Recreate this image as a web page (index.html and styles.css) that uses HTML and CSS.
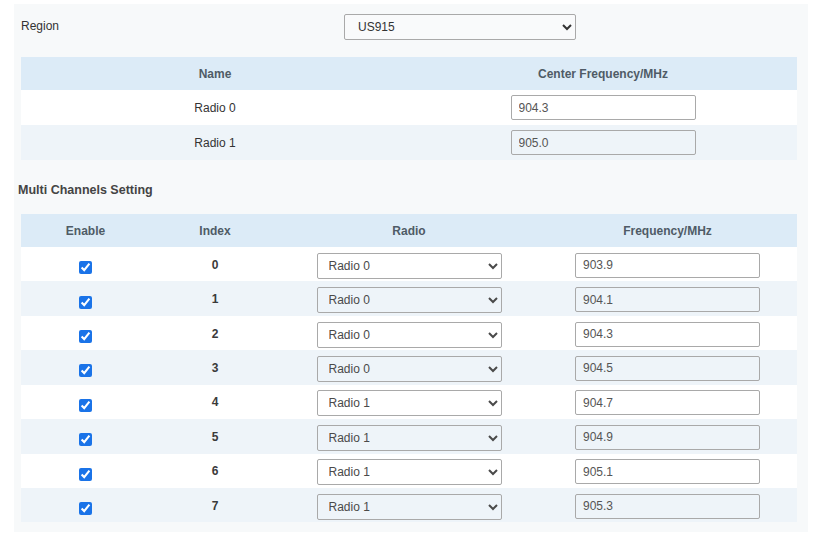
FILE: index.html
```html
<!DOCTYPE html>
<html>
<head>
<meta charset="utf-8">
<link rel="stylesheet" href="styles.css">
</head>
<body>
<div class="panel">
  <div class="region-row">
    <div class="region-label">Region</div>
    <select class="region-select"><option>US915</option></select>
  </div>

  <div class="grid grid-radio">
    <div class="row head"><div class="cell">Name</div><div class="cell">Center Frequency/MHz</div></div>
    <div class="row"><div class="cell">Radio 0</div><div class="cell"><input class="field" type="text" value="904.3"></div></div>
    <div class="row alt"><div class="cell">Radio 1</div><div class="cell"><input class="field" type="text" value="905.0"></div></div>
  </div>

  <div class="section-title">Multi Channels Setting</div>

  <div class="grid grid-multi">
    <div class="row head"><div class="cell">Enable</div><div class="cell">Index</div><div class="cell">Radio</div><div class="cell">Frequency/MHz</div></div>
    <div class="row"><div class="cell"><input class="check" type="checkbox" checked></div><div class="cell idx">0</div><div class="cell"><select class="field sel"><option>Radio 0</option><option>Radio 1</option></select></div><div class="cell"><input class="field freq" type="text" value="903.9"></div></div>
    <div class="row alt"><div class="cell"><input class="check" type="checkbox" checked></div><div class="cell idx">1</div><div class="cell"><select class="field sel"><option>Radio 0</option><option>Radio 1</option></select></div><div class="cell"><input class="field freq" type="text" value="904.1"></div></div>
    <div class="row"><div class="cell"><input class="check" type="checkbox" checked></div><div class="cell idx">2</div><div class="cell"><select class="field sel"><option>Radio 0</option><option>Radio 1</option></select></div><div class="cell"><input class="field freq" type="text" value="904.3"></div></div>
    <div class="row alt"><div class="cell"><input class="check" type="checkbox" checked></div><div class="cell idx">3</div><div class="cell"><select class="field sel"><option>Radio 0</option><option>Radio 1</option></select></div><div class="cell"><input class="field freq" type="text" value="904.5"></div></div>
    <div class="row"><div class="cell"><input class="check" type="checkbox" checked></div><div class="cell idx">4</div><div class="cell"><select class="field sel"><option>Radio 1</option><option>Radio 0</option></select></div><div class="cell"><input class="field freq" type="text" value="904.7"></div></div>
    <div class="row alt"><div class="cell"><input class="check" type="checkbox" checked></div><div class="cell idx">5</div><div class="cell"><select class="field sel"><option>Radio 1</option><option>Radio 0</option></select></div><div class="cell"><input class="field freq" type="text" value="904.9"></div></div>
    <div class="row"><div class="cell"><input class="check" type="checkbox" checked></div><div class="cell idx">6</div><div class="cell"><select class="field sel"><option>Radio 1</option><option>Radio 0</option></select></div><div class="cell"><input class="field freq" type="text" value="905.1"></div></div>
    <div class="row alt"><div class="cell"><input class="check" type="checkbox" checked></div><div class="cell idx">7</div><div class="cell"><select class="field sel"><option>Radio 1</option><option>Radio 0</option></select></div><div class="cell"><input class="field freq" type="text" value="905.3"></div></div>
  </div>
</div>
</body>
</html>
```

FILE: styles.css
```css
html, body {
  margin: 0;
  padding: 0;
  background: #ffffff;
}

body {
  font-family: "Liberation Sans", Arial, sans-serif;
  font-size: 12px;
  line-height: 14px;
  color: #333333;
}

.panel {
  margin: 4px 0 0 14px;
  width: 776px;
  height: 528px;
  padding: 0 11px 0 7px;
  background: #f7f9fa;
}

.region-row {
  display: flex;
  align-items: flex-start;
  padding-top: 10px;
  height: 26px;
  margin-bottom: 17px;
}

.region-label {
  width: 323px;
  padding-top: 5px;
  color: #333333;
}

.region-select {
  width: 232px;
  height: 26px;
  border: 1px solid #a9a9a9;
  border-radius: 2px;
  background: #f9fafb;
  padding: 0 0 0 9px;
  font-family: "Liberation Sans", Arial, sans-serif;
  font-size: 12px;
  color: #333333;
  margin: 0;
}

.grid {
  width: 776px;
}

.row {
  display: grid;
  align-items: center;
  justify-items: center;
  background: #ffffff;
}

.grid-radio .row {
  grid-template-columns: 388px 388px;
  height: 35px;
}

.grid-multi .row {
  grid-template-columns: 129px 130px 258px 259px;
  height: 34.43px;
}

.row.alt {
  background: #eef4f9;
}

.row.head {
  background: #dcebf7;
  color: #4f5b66;
  font-weight: bold;
  height: 33px;
}

.cell {
  text-align: center;
}

.idx {
  font-weight: bold;
  color: #3a3a3a;
  margin-top: 1px;
}

.section-title {
  font-weight: bold;
  font-size: 12.5px;
  color: #444444;
  margin: 23px 0 0 -3px;
  height: 31px;
}

.field {
  display: block;
  box-sizing: border-box;
  width: 185px;
  height: 25px;
  border: 1px solid #a9a9a9;
  border-radius: 2px;
  background: transparent;
  padding: 0 0 0 7px;
  font-family: "Liberation Sans", Arial, sans-serif;
  font-size: 12px;
  color: #555555;
  margin: 0;
}

.sel {
  height: 26px;
  color: #4a4a4a;
  margin-top: 3px;
  padding-left: 7px;
}

.freq {
  margin-top: 2px;
}

.check {
  display: block;
  width: 13px;
  height: 13px;
  margin: 7px 0 0 0;
  accent-color: #1a73e8;
}
```
